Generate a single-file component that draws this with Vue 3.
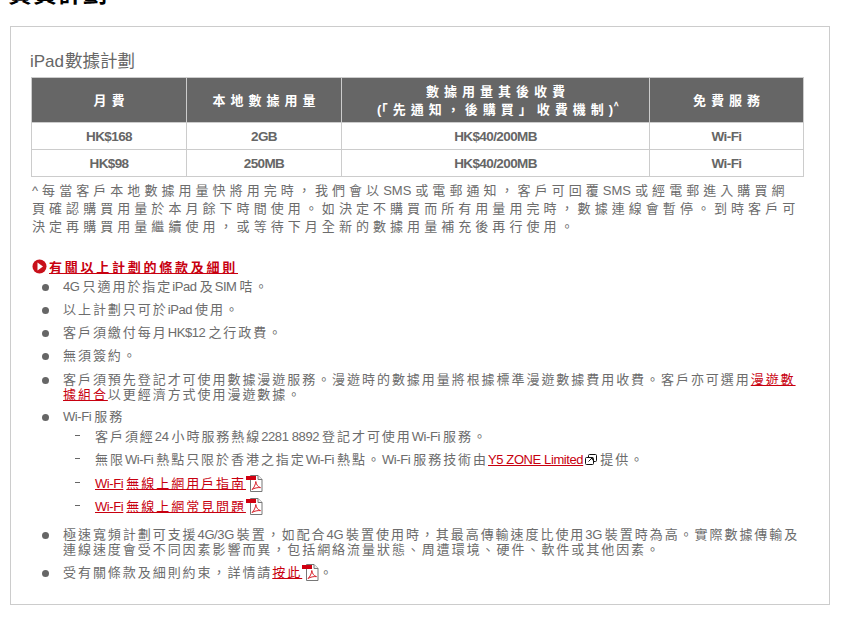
<script setup>
const tokenize = (line) => {
  const out = []
  line.split(/(\[[^\]]*\]|\{pdf\}|\{ext\})/).filter(Boolean).forEach((chunk) => {
    if (chunk === '{pdf}' || chunk === '{ext}') {
      out.push({ kind: chunk.slice(1, -1) })
      return
    }
    const link = chunk[0] === '['
    const text = link ? chunk.slice(1, -1) : chunk
    ;(text.match(/[\x20-\x7e]+|[^\x20-\x7e]+/g) || []).forEach((t) => {
      out.push({ kind: /^[\x20-\x7e]/.test(t) ? 'lat' : 'cjk', t, link })
    })
  })
  return out
}

const headers = [
  { lines: ['月費'], cls: 'c1' },
  { lines: ['本地數據用量'], cls: 'c2' },
  { lines: ['數據用量其後收費', '(「先通知，後購買」收費機制)'], sup: '^', cls: 'c3' },
  { lines: ['免費服務'], cls: 'c4' }
].map((h) => ({ ...h, lines: h.lines.map(tokenize) }))
const rows = [
  ['HK$168', '2GB', 'HK$40/200MB', 'Wi-Fi'],
  ['HK$98', '250MB', 'HK$40/200MB', 'Wi-Fi']
]
const note = [
  '^每當客戶本地數據用量快將用完時，我們會以SMS或電郵通知，客戶可回覆SMS或經電郵進入購買網',
  '頁確認購買用量於本月餘下時間使用。如決定不購買而所有用量用完時，數據連線會暫停。到時客戶可',
  '決定再購買用量繼續使用，或等待下月全新的數據用量補充後再行使用。'
].map(tokenize)

const terms = [
  { lines: ['4G只適用於指定iPad及SIM咭。'] },
  { lines: ['以上計劃只可於iPad使用。'] },
  { lines: ['客戶須繳付每月HK$12之行政費。'] },
  { lines: ['無須簽約。'], gap: 'wide' },
  { lines: ['客戶須預先登記才可使用數據漫遊服務。漫遊時的數據用量將根據標準漫遊數據費用收費。客戶亦可選用[漫遊數]', '[據組合]以更經濟方式使用漫遊數據。'], gap: 'narrow' },
  { lines: ['Wi-Fi服務'], gap: 'tight' },
  { sub: true, lines: ['客戶須經24小時服務熱線2281 8892登記才可使用Wi-Fi服務。'] },
  { sub: true, lines: ['無限Wi-Fi熱點只限於香港之指定Wi-Fi熱點。Wi-Fi服務技術由[Y5 ZONE Limited]{ext}提供。'], gap: 'wide' },
  { sub: true, lines: ['[Wi-Fi無線上網用戶指南]{pdf}'] },
  { sub: true, gap: 'last', lines: ['[Wi-Fi無線上網常見問題]{pdf}'] },
  { lines: ['極速寬頻計劃可支援4G/3G裝置，如配合4G裝置使用時，其最高傳輸速度比使用3G裝置時為高。實際數據傳輸及', '連線速度會受不同因素影響而異，包括網絡流量狀態、周遭環境、硬件、軟件或其他因素。'] },
  { lines: ['受有關條款及細則約束，詳情請[按此]{pdf}。'] }
].map((r) => ({ ...r, lines: r.lines.map(tokenize) }))
</script>

<template>
  <div class="page">
    <h1 class="page-title">資費計劃</h1>
    <section class="box">
      <h2 class="plan-title">iPad<span class="plan-cjk">數據計劃</span></h2>
      <table class="plans">
        <thead>
          <tr>
            <th v-for="h in headers" :key="h.cls" :class="h.cls">
              <div v-for="(l, i) in h.lines" :key="i">
                <span v-for="(t, j) in l" :key="j" :class="t.kind">{{ t.t }}</span><sup v-if="h.sup && i === h.lines.length - 1">{{ h.sup }}</sup>
              </div>
            </th>
          </tr>
        </thead>
        <tbody>
          <tr v-for="(r, i) in rows" :key="i">
            <td v-for="(c, j) in r" :key="j">{{ c }}</td>
          </tr>
        </tbody>
      </table>

      <div class="note">
        <div v-for="(line, i) in note" :key="i" class="note-line">
          <span v-for="(t, j) in line" :key="j" :class="t.kind">{{ t.t }}</span>
        </div>
      </div>

      <h3 class="terms-title">
        <svg class="go" width="15" height="15" viewBox="0 0 15 15">
          <circle cx="7.5" cy="7.5" r="7" fill="#c8101a" />
          <path d="M5.5 3.6 11 7.5 5.5 11.4Z" fill="#fff" />
        </svg>
        <span class="terms-text">有關以上計劃的條款及細則</span>
      </h3>

      <ul class="terms">
        <li v-for="(row, i) in terms" :key="i" :class="[row.gap, { sub: row.sub }]">
          <div v-for="(line, k) in row.lines" :key="k" class="term-line">
            <template v-for="(t, j) in line" :key="j">
              <svg v-if="t.kind === 'pdf'" class="pdf" width="17" height="17" viewBox="0 0 17 17">
                <path d="M4.5 .5H12L16 4.5V16.5H4.5Z" fill="#fff" stroke="#777" />
                <path d="M12 .5V4.5H16" fill="#eee" stroke="#777" />
                <rect x="0" y="1" width="10" height="4" fill="#d00010" />
                <path d="M6 14.5C8 13 9.5 9.5 9.8 6.5 10.4 10 12 12 14.5 12.6 11.5 12.4 8.5 13 6 14.5Z" fill="none" stroke="#d8202a" />
              </svg>
              <svg v-else-if="t.kind === 'ext'" class="ext" width="12" height="11" viewBox="0 0 12 11">
                <rect x="3.5" y=".5" width="8" height="7" rx="1" fill="#fff" stroke="#111" />
                <rect x=".5" y="3.5" width="8" height="7" rx="1" fill="#fff" stroke="#111" />
                <path d="M3.5 7.5 7 4M4.8 3.6H7.4V6.2" fill="none" stroke="#111" />
              </svg>
              <span v-else :class="[t.kind, { link: t.link }]">{{ t.t }}</span>
            </template>
          </div>
        </li>
      </ul>
    </section>
  </div>
</template>

<style scoped>
.page {
  width: 843px;
  height: 619px;
  overflow: hidden;
  padding-left: 10px;
  box-sizing: border-box;
  font-family: "Liberation Sans", "Noto Sans CJK TC", sans-serif;
  background: #fff;
  color: #6c6c6c;
}
.page-title {
  margin: -24px 0 0 -2px;
  height: 50px;
  font-size: 24px;
  line-height: 32px;
  font-weight: 700;
  letter-spacing: 1px;
  color: #000;
  font-family: "Noto Sans CJK TC", sans-serif;
}
.box {
  width: 820px;
  height: 579px;
  box-sizing: border-box;
  border: 1px solid #ccc;
  padding: 21px 0 0 19px;
}
.plan-title {
  margin: 0 0 4px;
  font-size: 17px;
  line-height: 23px;
  font-weight: 400;
  color: #666;
}
.plan-cjk {
  margin-left: 1px;
  font-size: 17.5px;
  font-family: "Noto Sans CJK TC", sans-serif;
}
.plans {
  margin-left: 1px;
  border-collapse: collapse;
  table-layout: fixed;
  width: 773px;
}
.plans th {
  height: 44px;
  padding: 0 0 0 5px;
  background: #666;
  border: 1px solid #ccc;
  color: #fff;
  font-family: "Noto Sans CJK TC", sans-serif;
  font-size: 13px;
  font-weight: 700;
  line-height: 18px;
  letter-spacing: 5px;
}
.plans th .lat {
  letter-spacing: 0;
  padding-right: 0;
  font-family: "Liberation Sans", sans-serif;
}
.plans th sup {
  font-size: 10px;
  line-height: 0;
  letter-spacing: 0;
}
.c1, .c2 { width: 149px; }
.c3 { width: 302px; }
.c4 { width: 148px; }
.plans td {
  height: 26px;
  padding: 0;
  border: 1px solid #ccc;
  text-align: center;
  font-size: 13.5px;
  letter-spacing: -0.6px;
  font-weight: 700;
  color: #666;
}
.note {
  margin: 4px 0 0 2px;
  line-height: 18px;
  font-size: 13px;
  white-space: nowrap;
}
.note .cjk { letter-spacing: 4.05px; }
.note .lat { padding-right: 4px; letter-spacing: 0; }
.note-line { height: 18px; }
.cjk { font-family: "Noto Sans CJK TC", sans-serif; }
.lat {
  letter-spacing: -0.4px;
  padding-right: 3px;
}
.terms-title {
  margin: 23px 0 0 2px;
  height: 16px;
  display: flex;
  align-items: center;
  gap: 2px;
  font-size: 13px;
  font-weight: 700;
}
.terms-text {
  color: #c8000f;
  text-decoration: underline;
  letter-spacing: 2.75px;
  font-family: "Noto Sans CJK TC", sans-serif;
}
.terms {
  margin: 4px 0 0;
  padding: 0 0 0 33px;
  list-style: none;
  font-size: 13px;
  white-space: nowrap;
}
.terms li {
  position: relative;
  margin-bottom: 8px;
}
.terms li::before {
  content: "";
  position: absolute;
  left: -21px;
  top: 6px;
  width: 7px;
  height: 7px;
  border-radius: 50%;
  background: #666;
}
.terms li.sub {
  margin-left: 32px;
}
.terms li.sub::before {
  left: -20px;
  top: 7px;
  width: 5px;
  height: 1px;
  border-radius: 0;
}
.terms li.wide { margin-bottom: 9px; }
.terms li.narrow { margin-bottom: 7px; }
.terms li.tight { margin-bottom: 5px; }
.terms li.last { margin-bottom: 13px; }
.term-line {
  line-height: 15px;
  height: 15px;
}
.terms .cjk { letter-spacing: 1.95px; }
.link {
  color: #c8000f;
  text-decoration: underline;
}
.pdf {
  vertical-align: -4px;
}
.ext { vertical-align: -1px; margin: 0 3px 0 -1px; }
</style>
